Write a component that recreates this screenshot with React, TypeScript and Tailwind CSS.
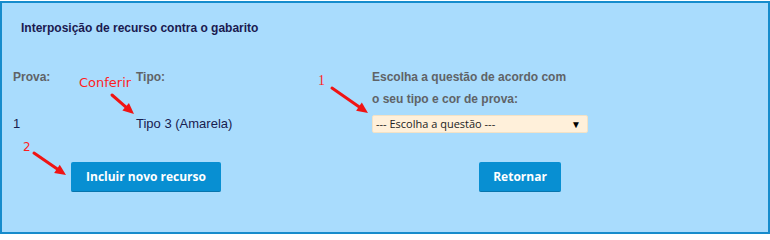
import React from "react";

interface ArrowProps {
	x1: number;
	y1: number;
	x2: number;
	y2: number;
}

function Arrow({ x1, y1, x2, y2 }: ArrowProps) {
	const dx = x2 - x1;
	const dy = y2 - y1;
	const len = Math.hypot(dx, dy);
	const ux = dx / len;
	const uy = dy / len;
	const head = 11;
	const half = 5;
	const bx = x2 - ux * head;
	const by = y2 - uy * head;
	const points = [
		`${x2},${y2}`,
		`${bx - uy * half},${by + ux * half}`,
		`${bx + uy * half},${by - ux * half}`,
	].join(" ");
	return (
		<g>
			<line x1={x1} y1={y1} x2={bx} y2={by} stroke="#f01414" strokeWidth={3} strokeLinecap="round" />
			<polygon points={points} fill="#f01414" />
		</g>
	);
}

export default function App() {
	return (
		<div className="relative h-[234px] w-[770px] overflow-hidden bg-white font-['Liberation_Sans',Arial,sans-serif]">
			<div className="mt-px h-[233px] w-[770px] border-2 border-[#168ccc] bg-[#a9dcfd]">
				<h1 className="mt-[17px] pl-[19px] text-[12px] font-bold leading-[16px] text-[#1b1a50]">
					Interposição de recurso contra o gabarito
				</h1>

				<div className="mt-[30px] grid grid-cols-[123px_236px_1fr] pl-[11px]">
					<span className="text-[12px] font-bold leading-[22px] text-[#5f6367]">Prova:</span>
					<span className="text-[12px] font-bold leading-[22px] text-[#5f6367]">Tipo:</span>
					<span className="text-[12px] font-bold leading-[22px] text-[#5f6367]">
						Escolha a questão de acordo com
						<br />o seu tipo e cor de prova:
					</span>

					<span className="mt-[5px] flex h-[18px] items-center text-[13px] text-[#18204f]">1</span>
					<span className="mt-[5px] flex h-[18px] items-center text-[13px] text-[#18204f]">
						Tipo 3 (Amarela)
					</span>
					<div className="mt-[5px] flex h-[18px] w-[216px] items-center justify-between rounded-[2px] border border-[#f3e2c6] bg-[#fff0da] pl-[3px] pr-[6px] font-['Open_Sans',sans-serif] text-[11px] text-[#222]">
						<span>--- Escolha a questão ---</span>
						<span className="text-[10px] leading-none text-black">▼</span>
					</div>
				</div>

				<div className="mt-[29px] flex gap-[258px] pl-[69px] font-['Open_Sans',sans-serif]">
					<button className="h-[30px] w-[150px] rounded-[2px] border-b border-[#0875ad] bg-[#088fd2] text-[12px] font-bold text-white">
						Incluir novo recurso
					</button>
					<button className="h-[30px] w-[82px] rounded-[2px] border-b border-[#0875ad] bg-[#088fd2] text-[12px] font-bold text-white">
						Retornar
					</button>
				</div>
			</div>

			<span className="absolute left-[79px] top-[75px] font-['DejaVu_Sans',sans-serif] text-[13px] leading-[16px] text-[#ff1e1e]">
				Conferir
			</span>
			<span className="absolute left-[318px] top-[73px] font-['Liberation_Serif',serif] text-[14px] leading-[16px] text-[#ff1e1e]">
				1
			</span>
			<span className="absolute left-[23px] top-[140px] font-['DejaVu_Sans',sans-serif] text-[12px] leading-[14px] text-[#ff1e1e]">
				2
			</span>
			<svg className="pointer-events-none absolute inset-0" width={770} height={234}>
				<Arrow x1={112} y1={95} x2={134} y2={114} />
				<Arrow x1={332} y1={88} x2={368} y2={113} />
				<Arrow x1={34} y1={153} x2={66} y2={175} />
			</svg>
		</div>
	);
}
